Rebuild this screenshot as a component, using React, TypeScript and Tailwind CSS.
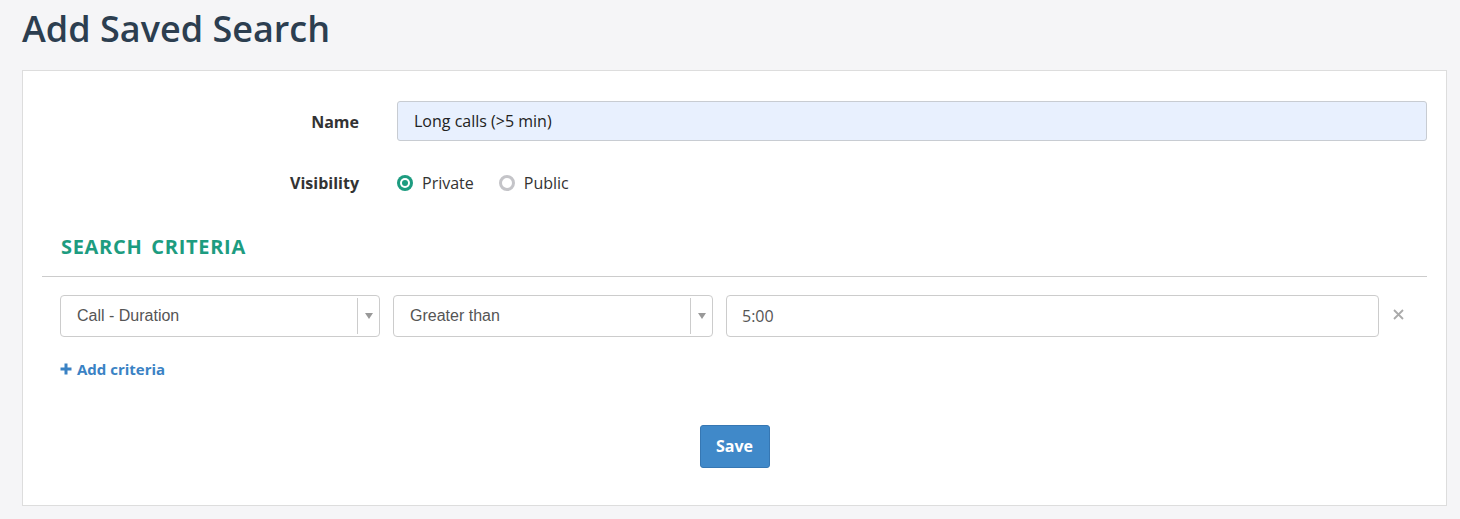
import React, { useState } from 'react';

const Radio: React.FC<{ checked: boolean; label: string; onClick: () => void }> = ({ checked, label, onClick }) => (
  <button type="button" onClick={onClick} className="flex items-center gap-[9px] text-[16px] text-[#333]">
    {checked ? (
      <span className="w-[16px] h-[16px] rounded-full bg-[#1d9c80] flex items-center justify-center">
        <span className="w-[10px] h-[10px] rounded-full bg-white flex items-center justify-center">
          <span className="w-[6px] h-[6px] rounded-full bg-[#1d9c80]" />
        </span>
      </span>
    ) : (
      <span className="w-[16px] h-[16px] rounded-full border-[3px] border-[#c4c4c8] bg-white" />
    )}
    {label}
  </button>
);

const Select: React.FC<{ value: string }> = ({ value }) => (
  <div className="w-[320px] h-[42px] border border-[#cccccc] rounded-[4px] bg-white flex items-center font-['Liberation_Sans',Arial,sans-serif] text-[16px] text-[#555]">
    <span className="flex-1 pl-[16px]">{value}</span>
    <span className="w-[22px] h-[36px] border-l border-[#cccccc] flex items-center justify-center">
      <svg width="8" height="6" viewBox="0 0 8 6"><path d="M0 0h8L4 6z" fill="#999" /></svg>
    </span>
  </div>
);

export default function App() {
  const [visibility, setVisibility] = useState<'private' | 'public'>('private');

  return (
    <div className="min-h-screen bg-[#f5f5f7] pl-[22px] pr-[13px] font-['Open_Sans',sans-serif] text-[#333]">
      <h1 className="text-[36px] font-semibold leading-[50px] pt-[4px] text-[#2c3e50] h-[70px]">Add Saved Search</h1>

      <div className="bg-white border border-[#dddddd] px-[19px] pt-[30px] pb-[37px]">
        {/* Name */}
        <div className="flex items-center">
          <label className="w-[317px] text-right font-bold text-[16px] text-[#333] pt-[2px]">Name</label>
          <input
            defaultValue="Long calls (>5 min)"
            className="ml-[38px] flex-1 h-[40px] bg-[#e8f0fe] border border-[#c8ccd2] rounded-[3px] px-[16px] text-[16px] text-[#222] outline-none"
          />
        </div>

        {/* Visibility */}
        <div className="flex items-center mt-[31px] h-[22px]">
          <label className="w-[317px] text-right font-bold text-[16px] text-[#333]">Visibility</label>
          <div className="ml-[38px] flex items-center gap-[25px]">
            <Radio checked={visibility === 'private'} label="Private" onClick={() => setVisibility('private')} />
            <Radio checked={visibility === 'public'} label="Public" onClick={() => setVisibility('public')} />
          </div>
        </div>

        {/* Search criteria */}
        <h2 className="mt-[40px] pl-[19px] text-[20px] font-bold text-[#1d9c80] tracking-[0.7px] [word-spacing:3px] leading-[26px]">SEARCH CRITERIA</h2>
        <div className="mt-[16px] border-t border-[#cccccc]" />

        <div className="pl-[18px] pr-[23px] pt-[18px]">
          <div className="flex items-center">
            <Select value="Call - Duration" />
            <div className="ml-[13px]">
              <Select value="Greater than" />
            </div>
            <input
              defaultValue="5:00"
              className="ml-[13px] flex-1 h-[42px] border border-[#cccccc] rounded-[4px] px-[15px] text-[16px] text-[#555] outline-none"
            />
            <button className="ml-[13px] w-[12px] flex justify-center -mt-[4px]">
              <svg width="11" height="11" viewBox="0 0 11 11"><path d="M1 1l9 9M10 1l-9 9" stroke="#aaa" strokeWidth="1.8" /></svg>
            </button>
          </div>

          <button className="mt-[21px] flex items-center gap-[5px] text-[15px] font-bold text-[#3a82c4]">
            <svg width="12" height="12" viewBox="0 0 12 12"><path d="M6 0.5v11M0.5 6h11" stroke="#3a82c4" strokeWidth="3" /></svg>
            Add criteria
          </button>
        </div>

        <div className="flex justify-center mt-[44px]">
          <button className="w-[70px] h-[43px] bg-[#4089c9] border border-[#3677b3] rounded-[3px] text-white font-bold text-[16px]">Save</button>
        </div>
      </div>
    </div>
  );
}
